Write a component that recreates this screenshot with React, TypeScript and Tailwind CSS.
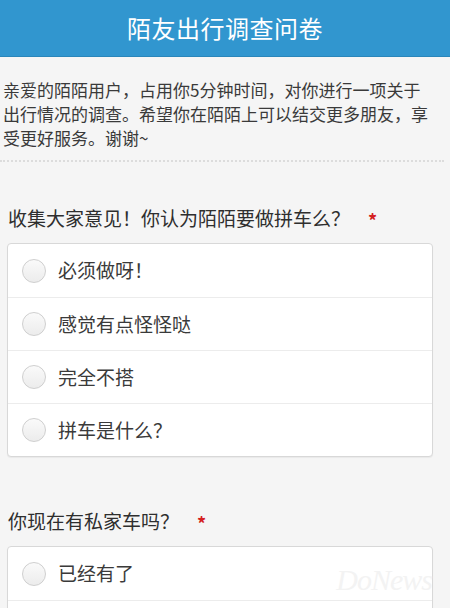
const font = { fontFamily: '"Noto Sans CJK SC", "Noto Sans", sans-serif' };

interface Question {
  title: string;
  options: string[];
}

const questions: Question[] = [
  {
    title: "收集大家意见！你认为陌陌要做拼车么？",
    options: ["必须做呀！", "感觉有点怪怪哒", "完全不搭", "拼车是什么？"],
  },
  {
    title: "你现在有私家车吗？",
    options: ["已经有了", ""],
  },
];

function Radio() {
  return (
    <span className="w-[24px] h-[24px] shrink-0 rounded-full border border-[#cfcfcf] bg-gradient-to-b from-[#fafafa] to-[#ececec]" />
  );
}

export default function App() {
  return (
    <div className="relative w-[450px] h-[608px] overflow-hidden bg-[#f5f5f5] text-[#333]" style={font}>
      <div className="h-[57px] bg-[#3196cf] border-b border-[#2a86ba] flex items-center justify-center">
        <h1 className="text-white text-[24px] tracking-[0.5px]">陌友出行调查问卷</h1>
      </div>

      <p className="pl-[3px] pr-[19px] pt-[21px] text-[17px] leading-[24px] text-[#3a3a3a]">
        亲爱的陌陌用户，占用你5分钟时间，对你进行一项关于出行情况的调查。希望你在陌陌上可以结交更多朋友，享受更好服务。谢谢~
      </p>
      <div className="mt-[10px] mr-[6px] border-t-2 border-dotted border-[#dcdcdc]" />

      {questions.map((q, qi) => (
        <div key={qi} className={qi === 0 ? "mt-[43px]" : "mt-[51px]"}>
          <h2 className="pl-[8px] text-[19px] leading-[26px] text-[#2e2e2e] flex items-center">
            {q.title}
            <span className="ml-[18px] mt-[4px] text-[#d42020] text-[18px] font-bold leading-[18px]">*</span>
          </h2>
          <div className="mt-[12px] ml-[7px] w-[426px] bg-white border border-[#d8d8d8] rounded-[4px] shadow-[0_1px_1px_rgba(0,0,0,0.05)]">
            {q.options.map((opt, oi) => (
              <div
                key={oi}
                className={`h-[53px] flex items-center pl-[14px] gap-[12px] ${oi > 0 ? "border-t border-[#ececec]" : ""}`}
              >
                {opt && <Radio />}
                {opt && <span className="text-[19px] text-[#3a3a3a]">{opt}</span>}
              </div>
            ))}
          </div>
        </div>
      ))}

      <span className="absolute right-[18px] bottom-[6px] text-[30px] italic text-[#f3f3f3] tracking-[-1px]" style={{ fontFamily: '"Liberation Serif", serif' }}>
        DoNews
      </span>
    </div>
  );
}
